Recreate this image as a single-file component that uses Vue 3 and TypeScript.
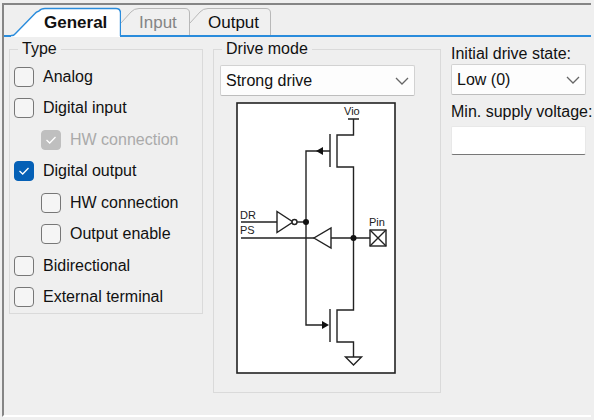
<script setup lang="ts">
import { ref } from 'vue'

interface Option {
  id: string
  label: string
  checked: boolean
  disabled?: boolean
  nested?: boolean
}

const options = ref<Option[]>([
  { id: 'analog', label: 'Analog', checked: false },
  { id: 'digital-input', label: 'Digital input', checked: false },
  { id: 'input-hw', label: 'HW connection', checked: true, disabled: true, nested: true },
  { id: 'digital-output', label: 'Digital output', checked: true },
  { id: 'output-hw', label: 'HW connection', checked: false, nested: true },
  { id: 'output-enable', label: 'Output enable', checked: false, nested: true },
  { id: 'bidirectional', label: 'Bidirectional', checked: false },
  { id: 'external', label: 'External terminal', checked: false },
])

const driveMode = ref('Strong drive')
const initialState = ref('Low (0)')
const minVoltage = ref('')
</script>

<template>
  <main class="panel">
    <nav class="tabs" role="tablist">
      <button class="tab active" role="tab" aria-selected="true">
        <svg class="shape" width="110" height="30" viewBox="0 0 110 30" aria-hidden="true">
          <path d="M0 30V28H1Q3 28 5 25L24 6Q29 1 35 1H105Q109 1 109 5V30Z" fill="#fff" />
          <path d="M0 28.5H1Q3 28.5 5 26L24 6.500Q25 5 28 4Q30 1.500 34 1.500H105Q109.500 1.500 109.500 6V29" fill="none" stroke="#2a8cdc" stroke-width="1.400" />
        </svg>
        <span>General</span>
      </button>
      <button class="tab input-tab" role="tab" aria-selected="false" disabled>
        <svg class="shape" width="70" height="27" viewBox="0 0 70 27" aria-hidden="true">
          <path d="M0 15L10 4Q13 .5 18 .5H64Q68.500 .5 68.500 5V27H0Z" fill="#f0f0f0" />
          <path d="M0 15L10 4Q13 .5 18 .5H64Q68.500 .5 68.500 5V27" fill="none" stroke="#b8b8b8" />
        </svg>
        <span>Input</span>
      </button>
      <button class="tab output-tab" role="tab" aria-selected="false">
        <svg class="shape" width="82" height="27" viewBox="0 0 82 27" aria-hidden="true">
          <path d="M0 15L10 4Q13 .5 18 .5H76Q80.500 .5 80.500 5V27H0Z" fill="#f0f0f0" />
          <path d="M0 15L10 4Q13 .5 18 .5H76Q80.500 .5 80.500 5V27" fill="none" stroke="#b8b8b8" />
        </svg>
        <span>Output</span>
      </button>
    </nav>

    <div class="content">
      <fieldset class="group">
        <legend>Type</legend>
        <div class="options">
          <label v-for="option in options" :key="option.id" class="option" :class="{ nested: option.nested, disabled: option.disabled }">
            <input v-model="option.checked" type="checkbox" :disabled="option.disabled" />
            <svg class="tick" width="20" height="20" viewBox="0 0 20 20" aria-hidden="true">
              <path d="M5.500 10L8.700 13L14.500 7" fill="none" stroke="currentColor" stroke-width="1.300" />
            </svg>
            <span>{{ option.label }}</span>
          </label>
        </div>
      </fieldset>

      <fieldset class="group drive">
        <legend>Drive mode</legend>
        <div class="select">
          <select v-model="driveMode" aria-label="Drive mode">
            <option>Strong drive</option>
          </select>
          <svg class="chevron" width="14" height="8" viewBox="0 0 14 8" aria-hidden="true">
            <path d="M1 1L7 7L13 1" fill="none" stroke="#666" stroke-width="1.300" />
          </svg>
        </div>
        <svg class="diagram" width="160" height="272" viewBox="0 0 160 272" role="img" aria-label="Strong drive circuit">
          <rect x="1" y="1" width="158" height="270" fill="#fff" stroke="#222" stroke-width="1.600" />
          <g fill="none" stroke="#222" stroke-width="1.400">
            <path d="M112 17H123M117.500 17V33H101V65H117.500V208H101V240H117.500V255" />
            <path d="M94 32V65M94 207V240" />
            <path d="M94 49H70V223H90" />
            <path d="M5 120H41M5 136H78M95 136H134" />
            <path d="M41 109.500V130.500L57 120Z" />
            <circle cx="58.500" cy="120" r="2.500" fill="#fff" />
            <path d="M61 120H70" />
            <path d="M95 126V146L78 136Z" />
            <rect x="134" y="128" width="16" height="16" />
            <path d="M134 128L150 144M150 128L134 144" />
            <path d="M109.500 255H125.500L117.500 263Z" fill="#fff" />
          </g>
          <g fill="#111">
            <circle cx="70" cy="120" r="3" />
            <circle cx="117.500" cy="136" r="3" />
            <path d="M80 49L87 45V53Z" />
            <path d="M93 223L86 219V227Z" />
          </g>
          <g class="labels">
            <text x="108" y="13">Vio</text>
            <text x="4" y="117">DR</text>
            <text x="4" y="132">PS</text>
            <text x="133" y="124">Pin</text>
          </g>
        </svg>
      </fieldset>

      <section class="settings">
        <label for="initial-state">Initial drive state:</label>
        <div class="select">
          <select id="initial-state" v-model="initialState">
            <option>Low (0)</option>
          </select>
          <svg class="chevron" width="14" height="8" viewBox="0 0 14 8" aria-hidden="true">
            <path d="M1 1L7 7L13 1" fill="none" stroke="#666" stroke-width="1.300" />
          </svg>
        </div>
        <label for="min-voltage" class="second">Min. supply voltage:</label>
        <input id="min-voltage" v-model="minVoltage" class="field" type="text" />
      </section>
    </div>
  </main>
</template>

<style>
body {
  background: #efefef;
}
</style>

<style scoped>
.panel {
  box-sizing: border-box;
  min-height: calc(100vh - 6px);
  margin: 3px 3px 0 2px;
  border-top: 2px solid #858585;
  border-left: 2px solid #858585;
  border-bottom: 2px solid #fff;
  background: #efefef;
  color: #111;
  font: 16px/20px "Liberation Sans", Arial, sans-serif;
}

.tabs {
  display: flex;
  align-items: flex-end;
  height: 28px;
  padding: 2px 0 0 7px;
  border-bottom: 2px solid #2a8cdc;
}

.tab {
  position: relative;
  height: 28px;
  padding: 4px 0 0 18px;
  border: 0;
  background: none;
  color: inherit;
  font: inherit;
  font-size: 17px;
  text-align: left;
}

.shape {
  position: absolute;
  left: 0;
  bottom: 0;
}

.tab span {
  position: relative;
}

.active {
  width: 110px;
  padding-left: 33px;
  font-weight: bold;
  z-index: 1;
}

.active .shape {
  bottom: -2px;
}

.input-tab {
  width: 69px;
  color: #858585;
}

.output-tab {
  width: 82px;
}

.content {
  display: grid;
  grid-template-columns: minmax(0, 194fr) minmax(0, 228fr) minmax(0, 135fr);
  align-items: start;
  gap: 10px;
  padding: 3px 5px 0 5px;
}

.group {
  min-width: 0;
  margin: 0;
  padding: 0 4px;
  border: 1px solid #dadada;
}

legend {
  margin-left: 4px;
  padding: 0 4px;
  line-height: 18px;
}

.options {
  display: grid;
  grid-auto-rows: 1fr;
  height: 252px;
  margin-top: 3px;
}

.option {
  position: relative;
  display: flex;
  align-items: center;
  gap: 9px;
}

.nested {
  padding-left: 27px;
}

.option input {
  appearance: none;
  box-sizing: border-box;
  flex: none;
  width: 20px;
  height: 20px;
  margin: 0;
  border: 1px solid #777;
  border-radius: 4px;
  background: #f5f5f5;
}

.option input:checked {
  border-color: #0560b6;
  background: #0560b6;
}

.option input:disabled {
  border-color: #bfbfbf;
  background: #bfbfbf;
}

.tick {
  display: none;
  position: absolute;
  color: #fff;
  pointer-events: none;
}

.option input:checked + .tick {
  display: block;
}

.disabled {
  color: #aaa;
}

.drive {
  padding: 0 25px 18px 6px;
}

.drive legend {
  margin-left: 2px;
}

.select {
  position: relative;
}

select {
  appearance: none;
  display: block;
  box-sizing: border-box;
  width: 100%;
  height: 31px;
  padding: 0 5px;
  border: 1px solid #d2d2d2;
  border-bottom-color: #bdbdbd;
  border-radius: 2px;
  background: #fdfdfd;
  color: inherit;
  font: inherit;
}

.drive .select {
  margin-top: 7px;
}

.chevron {
  position: absolute;
  right: 6px;
  top: 12px;
  pointer-events: none;
}

.diagram {
  display: block;
  margin: 6px 0 0 16px;
}

.labels {
  fill: #222;
  font: 11px "Liberation Sans", Arial, sans-serif;
}

.settings {
  display: grid;
  grid-template-columns: minmax(0, 1fr);
  padding-top: 4px;
}

.settings label {
  white-space: nowrap;
}

.settings .second {
  margin-top: 7px;
}

.field {
  box-sizing: border-box;
  width: 100%;
  height: 29px;
  margin-top: 4px;
  padding: 0 5px;
  border: 1px solid #e8e8e8;
  border-bottom-color: #777;
  border-radius: 2px;
  background: #fff;
  font: inherit;
}
</style>
